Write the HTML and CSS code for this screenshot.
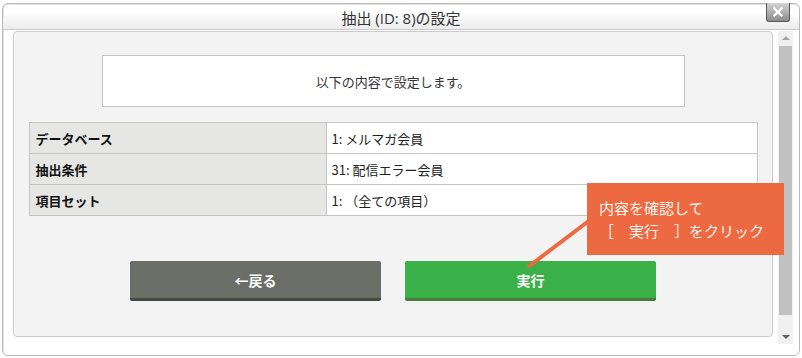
FILE: index.html
```html
<!DOCTYPE html>
<html lang="ja">
<head>
  <meta charset="UTF-8" />
  <title>抽出の設定</title>
  <link rel="stylesheet" href="styles.css">
</head>
<body>
  <div class="dialog">
    <div class="titlebar">抽出 (ID: 8)の設定</div>
    <button class="close" title="閉じる">
      <svg width="10" height="10" viewBox="0 0 10 10"><path d="M1.5 1.5 L8.5 8.5 M8.5 1.5 L1.5 8.5" stroke="#fff" stroke-width="2.4" stroke-linecap="square"/></svg>
    </button>

    <div class="body">
      <div class="panel">
        <div class="message">以下の内容で設定します。</div>

        <table class="summary">
          <tr>
            <th>データベース</th>
            <td>1: メルマガ会員</td>
          </tr>
          <tr>
            <th>抽出条件</th>
            <td>31: 配信エラー会員</td>
          </tr>
          <tr>
            <th>項目セット</th>
            <td>1: （全ての項目）</td>
          </tr>
        </table>

        <div class="actions">
          <button class="btn btn-back">←戻る</button>
          <button class="btn btn-run">実行</button>
        </div>
      </div>

      <div class="scrollbar">
        <span class="arrow up"></span>
        <div class="thumb"></div>
        <span class="arrow down"></span>
      </div>
    </div>
  </div>

  <!-- annotation -->
  <svg class="pointer" width="802" height="358" viewBox="0 0 802 358">
    <line x1="590" y1="220" x2="528" y2="267" stroke="#ec6941" stroke-width="4"/>
  </svg>
  <div class="callout">内容を確認して<br>［　実行　］をクリック</div>
</body>
</html>
```

FILE: styles.css
```css
* {
  box-sizing: border-box;
}

body {
  margin: 0;
  background: #fff;
  font-family: "Noto Sans CJK JP", "Liberation Sans", sans-serif;
  color: #222;
  position: relative;
  width: 802px;
  height: 358px;
  overflow: hidden;
}

.dialog {
  position: relative;
  margin: 3px 2px 0;
  height: 353px;
  border: 1px solid #b9b9b9;
  border-radius: 6px;
  background: #fff;
  box-shadow: inset 1px 1px 0 #e4e4e4;
}

.titlebar {
  position: relative;
  z-index: 0;
  height: 26px;
  padding-top: 3px;
  line-height: 22px;
  font-size: 15px;
  font-family: "Open Sans", "Noto Sans CJK JP", sans-serif;
  text-align: center;
  color: #333;
  border-bottom: 1px solid #c9c9c9;
}

.titlebar::before {
  content: "";
  position: absolute;
  z-index: -1;
  top: 10px;
  left: 0;
  right: 0;
  bottom: 0;
  border-radius: 6px 6px 0 0;
  background: linear-gradient(#fbfbfb, #ececec);
}

.close {
  position: absolute;
  top: -1px;
  right: 9px;
  width: 24px;
  height: 19px;
  padding: 0;
  border: 1px solid #5a5a5a;
  border-top: none;
  border-radius: 0 0 3px 3px;
  background: linear-gradient(#d4d4d4, #8c8c8c);
  display: flex;
  align-items: center;
  justify-content: center;
  cursor: pointer;
}

.body {
  display: flex;
  gap: 5px;
  margin: 1px 0 0 10px;
}

.panel {
  width: 760px;
  height: 306px;
  background: #f3f3f3;
  border: 1px solid #cbcbcb;
  border-radius: 4px;
  padding-top: 23px;
}

.message {
  width: 583px;
  height: 52px;
  margin: 0 auto;
  background: #fff;
  border: 1px solid #c4c4c4;
  display: flex;
  align-items: center;
  justify-content: center;
  font-size: 13px;
  color: #333;
}

.summary {
  width: 729px;
  margin: 15px auto 0;
  border-collapse: collapse;
  font-size: 13px;
}

.summary th,
.summary td {
  height: 31px;
  padding: 0 6px;
  border: 1px solid #c4c4c4;
  text-align: left;
}

.summary th {
  width: 297px;
  background: #e6e7e5;
  font-weight: bold;
  color: #111;
}

.summary td {
  background: #fff;
  padding-left: 5px;
  color: #222;
}

.actions {
  display: flex;
  justify-content: center;
  gap: 24px;
  margin-top: 45px;
}

.btn {
  width: 251px;
  height: 40px;
  border: none;
  border-bottom: 3px solid;
  border-radius: 2px;
  color: #fff;
  font-family: inherit;
  font-size: 14px;
  font-weight: bold;
  cursor: pointer;
}

.btn-back {
  background: #6a6e67;
  border-bottom-color: #454843;
}

.btn-run {
  background: #3cb048;
  border-bottom-color: #4a7a3d;
}

.scrollbar {
  width: 15px;
  height: 313px;
  background: #f0f0f0;
  display: flex;
  flex-direction: column;
  align-items: center;
}

.arrow {
  width: 0;
  height: 0;
  border-left: 4px solid transparent;
  border-right: 4px solid transparent;
}

.arrow.up {
  margin-top: 5px;
  border-bottom: 4px solid #a3a3a3;
}

.arrow.down {
  margin-top: 20px;
  border-top: 4px solid #5f5f5f;
}

.thumb {
  width: 13px;
  height: 269px;
  margin-top: 6px;
  background: #c1c1c1;
}

.pointer {
  position: absolute;
  top: 0;
  left: 0;
  pointer-events: none;
}

.callout {
  position: absolute;
  left: 587px;
  top: 183px;
  width: 197px;
  height: 72px;
  padding: 13px 0 0 12px;
  background: #ec6941;
  color: #fff5f0;
  font-size: 15px;
  line-height: 23px;
  white-space: nowrap;
}
```
